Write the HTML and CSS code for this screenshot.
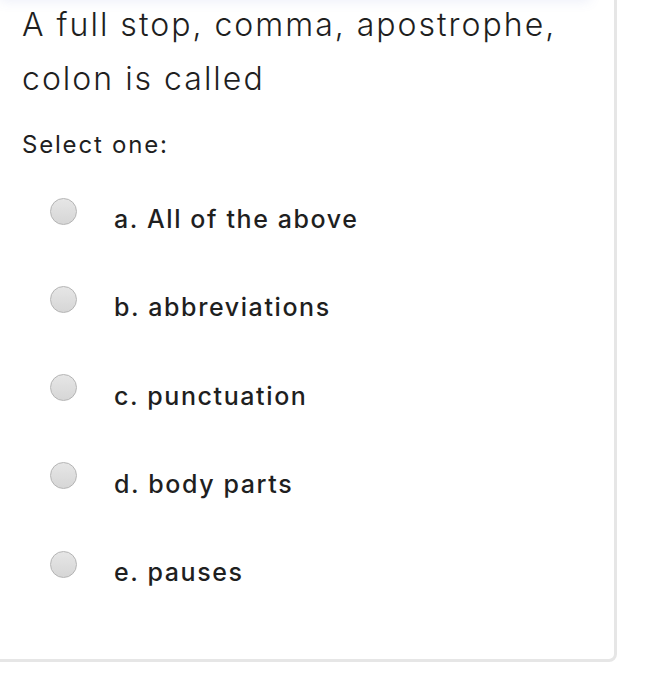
FILE: index.html
```html
<!DOCTYPE html>
<html>
<head>
<meta charset="utf-8">
<link rel="stylesheet" href="styles.css">
</head>
<body>
<div class="topbar"></div>
<div class="card">
  <div class="question">A full stop, comma, apostrophe, colon is called</div>
  <div class="prompt">Select one:</div>
  <div class="options">
    <label class="option"><span class="radio"></span><span class="label">a. All of the above</span></label>
    <label class="option"><span class="radio"></span><span class="label">b. abbreviations</span></label>
    <label class="option"><span class="radio"></span><span class="label">c. punctuation</span></label>
    <label class="option"><span class="radio"></span><span class="label">d. body parts</span></label>
    <label class="option"><span class="radio"></span><span class="label">e. pauses</span></label>
  </div>
</div>
</body>
</html>
```
FILE: styles.css
```css
html, body {
  margin: 0;
  padding: 0;
  background: #ffffff;
  overflow: hidden;
}
body {
  font-family: Inter, "Open Sans", sans-serif;
  color: #1f1f1f;
  position: relative;
}
.topbar {
  position: absolute;
  left: 0;
  top: -20px;
  width: 590px;
  height: 20px;
  box-shadow: 0 2px 12px rgba(90, 110, 200, 0.10);
}
.card {
  margin-left: -20px;
  margin-top: -20px;
  width: 637px;
  height: 682px;
  box-sizing: border-box;
  border: 3px solid #e6e6e6;
  border-radius: 8px;
  padding: 15px 0 0 39px;
}
.question {
  font-size: 32px;
  line-height: 54px;
  font-weight: 300;
  width: 575px;
  letter-spacing: 2px;
}
.prompt {
  margin-top: 19px;
  font-size: 24px;
  line-height: 40px;
  letter-spacing: 1.8px;
}
.options {
  display: flex;
  flex-direction: column;
  margin-top: 2px;
}
.option {
  display: flex;
  align-items: center;
  height: 88.25px;
  padding-left: 28px;
}
.radio {
  width: 25px;
  height: 25px;
  border-radius: 50%;
  border: 1px solid #b4b4b4;
  background: linear-gradient(#e6e6e6, #d6d6d6);
  flex: none;
  margin-right: 37px;
}
.label {
  font-size: 25px;
  font-weight: 500;
  margin-top: 16px;
  letter-spacing: 1.6px;
}
```
